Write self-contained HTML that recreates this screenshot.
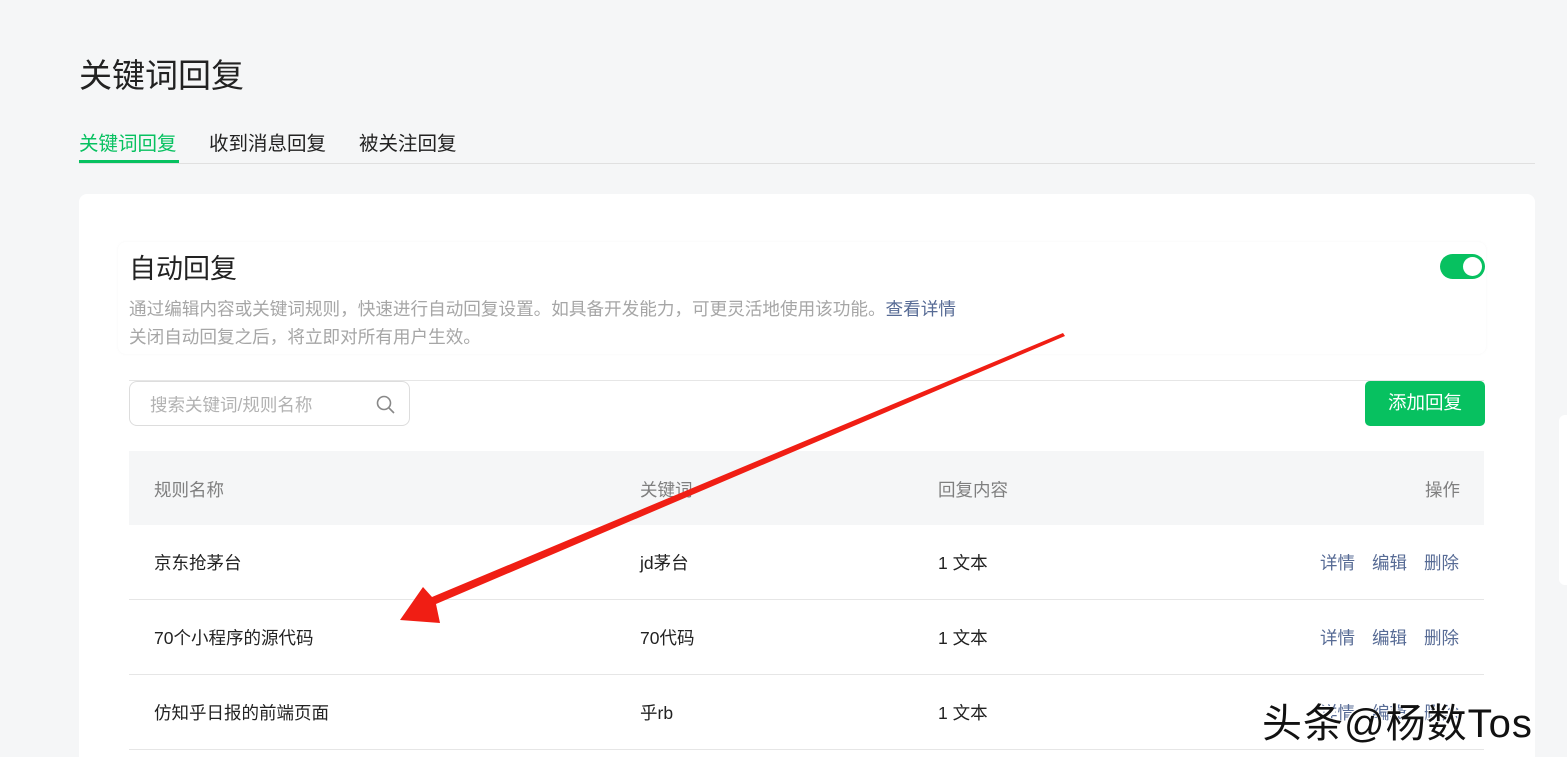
<!DOCTYPE html>
<html><head><meta charset="utf-8"><style>
*{margin:0;padding:0;box-sizing:border-box}
html,body{width:1567px;height:757px;overflow:hidden}
body{background:#f5f6f7;font-family:"Liberation Sans","Noto Sans CJK SC",sans-serif;position:relative;color:#222}
.a{position:absolute;white-space:nowrap}
.card{position:absolute;left:79px;top:194px;width:1456px;height:563px;background:#fff;border-radius:8px 8px 0 0}
.row{position:absolute;left:129px;width:1355px;height:75px;border-bottom:1px solid #e6e6e6;font-size:17.5px;color:#222}
.row span{position:absolute;top:25px}
.ops{color:#576b95}
</style></head><body>
<div class="a" style="left:79px;top:49px;font-size:33px;color:#222">关键词回复</div>
<div class="a" style="left:79px;top:127px;font-size:19.5px;color:#07c160">关键词回复</div>
<div class="a" style="left:79px;top:160px;width:100px;height:3px;background:#07c160"></div>
<div class="a" style="left:209px;top:127px;font-size:19.5px">收到消息回复</div>
<div class="a" style="left:359px;top:127px;font-size:19.5px">被关注回复</div>
<div class="a" style="left:79px;top:163px;width:1456px;height:1px;background:#e0e0e0"></div>
<div class="card"></div>
<div class="a" style="left:118px;top:242px;width:1368px;height:112px;border-radius:8px;box-shadow:0 0 3px rgba(0,0,0,0.04)"></div>
<div class="a" style="left:129px;top:247px;font-size:27px">自动回复</div>
<div class="a" style="left:1440px;top:254px;width:45px;height:25px;border-radius:13px;background:#07c160"><div style="position:absolute;right:3px;top:3px;width:19px;height:19px;border-radius:50%;background:#fff"></div></div>
<div class="a" style="left:129px;top:296px;font-size:17.6px;color:#a6a6a6">通过编辑内容或关键词规则，快速进行自动回复设置。如具备开发能力，可更灵活地使用该功能。<span style="color:#576b95">查看详情</span></div>
<div class="a" style="left:129px;top:324px;font-size:17.6px;color:#a6a6a6">关闭自动回复之后，将立即对所有用户生效。</div>
<div class="a" style="left:129px;top:380px;width:1355px;height:1px;background:#e6e6e6"></div>
<div class="a" style="left:129px;top:381px;width:281px;height:45px;border:1px solid #ddd;border-radius:8px;background:#fff"></div>
<div class="a" style="left:150px;top:392px;font-size:17.5px;color:#b2b2b2">搜索关键词/规则名称</div>
<svg class="a" style="left:375px;top:394px" width="22" height="22" viewBox="0 0 22 22"><circle cx="9" cy="9" r="6.5" fill="none" stroke="#888" stroke-width="1.6"/><path d="M14 14l5 5" stroke="#888" stroke-width="1.6"/></svg>
<div class="a" style="left:1365px;top:381px;width:120px;height:45px;border-radius:5px;background:#07c160;color:#fff;font-size:18.5px;text-align:center;line-height:44px">添加回复</div>
<div class="a" style="left:129px;top:451px;width:1355px;height:74px;background:#f5f6f7;font-size:17.5px;color:#7f7f7f">
<span class="a" style="left:25px;top:26px">规则名称</span><span class="a" style="left:511px;top:26px">关键词</span><span class="a" style="left:809px;top:26px">回复内容</span><span class="a" style="right:24px;top:26px">操作</span></div>
<div class="row" style="top:525px"><span style="left:25px">京东抢茅台</span><span style="left:511px">jd茅台</span><span style="left:809px">1 文本</span><span class="ops" style="left:1191px">详情</span><span class="ops" style="left:1243px">编辑</span><span class="ops" style="left:1295px">删除</span></div>
<div class="row" style="top:600px"><span style="left:25px">70个小程序的源代码</span><span style="left:511px">70代码</span><span style="left:809px">1 文本</span><span class="ops" style="left:1191px">详情</span><span class="ops" style="left:1243px">编辑</span><span class="ops" style="left:1295px">删除</span></div>
<div class="row" style="top:675px"><span style="left:25px">仿知乎日报的前端页面</span><span style="left:511px">乎rb</span><span style="left:809px">1 文本</span><span class="ops" style="left:1191px">详情</span><span class="ops" style="left:1243px">编辑</span><span class="ops" style="left:1295px">删除</span></div>
<div class="a" style="left:1559px;top:415px;width:20px;height:170px;background:#fff;border-radius:6px"></div>
<svg class="a" style="left:0;top:0" width="1567" height="757"><polygon points="1065,336 1063,333 432,597 423,587 400,620 440,623 436,604" fill="#f01e14"/></svg>
<div class="a" style="left:1262px;top:691px;font-size:40px;letter-spacing:1px;color:#111;text-shadow:2px 2px 0 #fff,-1px -1px 0 #fff">头条@杨数Tos</div>
</body></html>
